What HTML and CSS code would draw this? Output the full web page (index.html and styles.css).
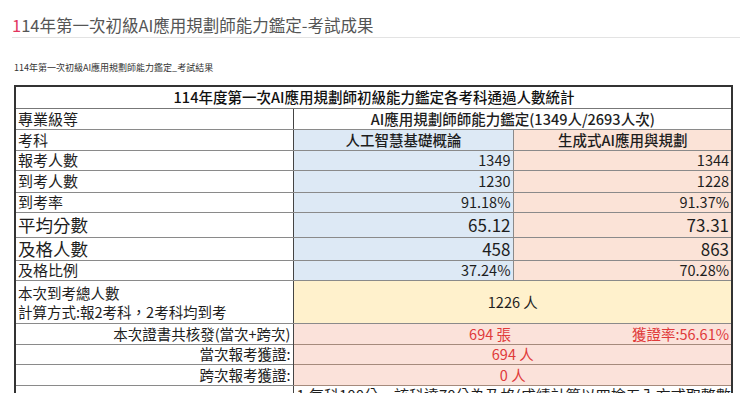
FILE: index.html
```html
<!DOCTYPE html>
<html lang="zh-Hant">
<head>
<meta charset="utf-8">
<title>114年第一次初級AI應用規劃師能力鑑定-考試成果</title>
<link rel="stylesheet" href="styles.css">
</head>
<body>
<h1 class="page-title"><span class="accent">1</span>14年第一次初級AI應用規劃師能力鑑定-考試成果</h1>
<p class="sub">114年第一次初級AI應用規劃師能力鑑定_考試結果</p>
<table class="stats">
  <colgroup><col class="c1"><col class="c2"><col class="c3"></colgroup>
  <tr class="r-title"><td colspan="3" class="center medium">114年度第一次AI應用規劃師初級能力鑑定各考科通過人數統計</td></tr>
  <tr class="r21"><td class="lab">專業級等</td><td colspan="2" class="center medium">AI應用規劃師師能力鑑定(1349人/2693人次)</td></tr>
  <tr class="r21"><td class="lab">考科</td><td class="blue center medium">人工智慧基礎概論</td><td class="pink center medium">生成式AI應用與規劃</td></tr>
  <tr class="r20"><td class="lab">報考人數</td><td class="blue num">1349</td><td class="pink num">1344</td></tr>
  <tr class="r22"><td class="lab">到考人數</td><td class="blue num">1230</td><td class="pink num">1228</td></tr>
  <tr class="r20"><td class="lab">到考率</td><td class="blue num">91.18%</td><td class="pink num">91.37%</td></tr>
  <tr class="r25 big"><td class="lab">平均分數</td><td class="blue num">65.12</td><td class="pink num">73.31</td></tr>
  <tr class="r23 big"><td class="lab">及格人數</td><td class="blue num">458</td><td class="pink num">863</td></tr>
  <tr class="r20"><td class="lab">及格比例</td><td class="blue num">37.24%</td><td class="pink num">70.28%</td></tr>
  <tr class="r43"><td class="lab two">本次到考總人數<br>計算方式:報2考科，2考科均到考</td><td colspan="2" class="yellow center">1226 人</td></tr>
  <tr class="r21 cert"><td class="lab right nob">本次證書共核發(當次+跨次)</td><td class="pink2 num red nor">694 張</td><td class="pink2 num red nol">獲證率:56.61%</td></tr>
  <tr class="r20 cert"><td class="lab right nob">當次報考獲證:</td><td colspan="2" class="pink2 center red">694 人</td></tr>
  <tr class="r21 cert"><td class="lab right">跨次報考獲證:</td><td colspan="2" class="pink2 center red">0 人</td></tr>
  <tr class="r-note"><td class="lab"></td><td colspan="2" class="note">1.每科100分，該科達70分為及格(成績計算以四捨五入方式取整數</td></tr>
</table>
</body>
</html>
```
FILE: styles.css
```css
html, body {
  margin: 0;
  padding: 0;
  background: #fff;
}
body {
  font-family: "Noto Sans CJK TC", "Noto Sans", sans-serif;
  color: #222;
  overflow: hidden;
}
.page-title {
  margin: 0 0 0 12px;
  padding: 14px 0 1px 0;
  font-size: 16.5px;
  line-height: 22px;
  font-weight: normal;
  color: #555;
  border-bottom: 1px solid #e3e3e3;
  white-space: nowrap;
}
.accent {
  color: #e2355e;
}
.sub {
  margin: 24px 0 0 14px;
  font-size: 9px;
  line-height: 12px;
  color: #333;
}
.stats {
  margin: 11px 0 0 14px;
  border-collapse: collapse;
  table-layout: fixed;
  width: 717px;
  border: 2px solid #333;
  font-size: 14.5px;
  color: #1e1e1e;
}
.c1 { width: 278px; }
.c2 { width: 220px; }
.c3 { width: 219px; }
.stats td {
  padding: 0 2px 0 3px;
  border: 1px solid #8a8a8a;
  line-height: 18px;
  white-space: nowrap;
  overflow: hidden;
  vertical-align: middle;
}
.stats td.lab {
  border-right: 1px solid #444;
  font-size: 15px;
  padding-left: 2px;
}
.r-title td {
  border-bottom: 1px solid #777;
  font-size: 14.5px;
  color: #111;
}
.r-title { height: 22px; }
.r20 { height: 20px; }
.r21 { height: 21px; }
.r22 { height: 22px; }
.r23 { height: 23px; }
.r25 { height: 25px; }
.r43 { height: 43px; }
.big td { font-size: 17px; }
.big td.lab { font-size: 17.5px; }
.center { text-align: center; }
.num { text-align: right; }
.right { text-align: right; }
.medium { font-weight: 500; }
.blue { background: #dde9f5; }
.pink { background: #fbe3d7; }
.pink2 { background: #fbe2da; }
.yellow { background: #fff1cc; }
.red { color: #e03a3a; }
.stats td.two {
  font-size: 14.5px;
  line-height: 19px;
}
.cert td { font-size: 14.5px; }
.cert td.lab { font-size: 14.5px; }
.cert td.pink2 { border-color: #a58a7c; }
.stats td.nob { border-bottom: none; }
.stats td.nor { border-right: none; }
.stats td.nol { border-left: none; }
.r-note { height: 20px; }
.r-note td { vertical-align: top; }
.note {
  font-size: 15px;
  padding-top: 1px;
}
```
